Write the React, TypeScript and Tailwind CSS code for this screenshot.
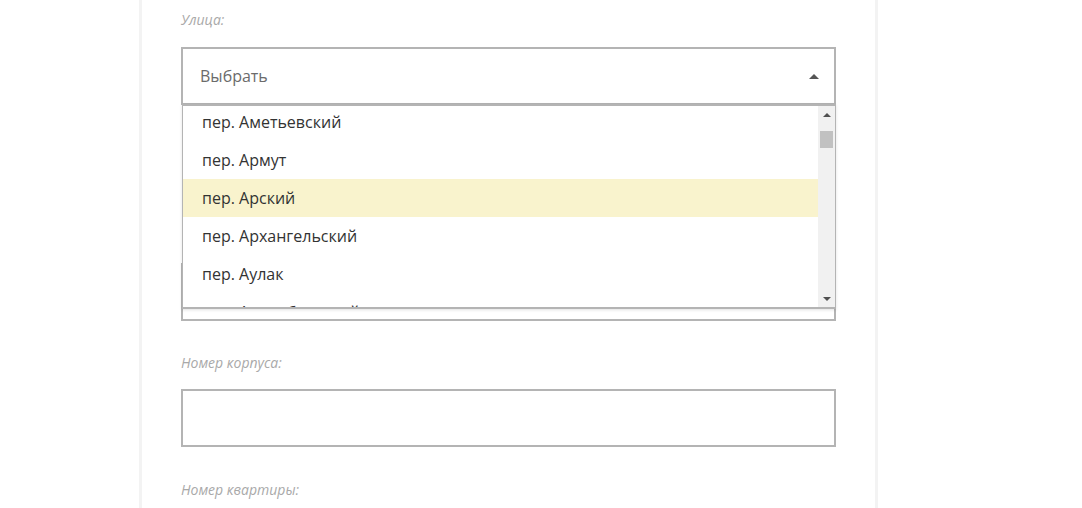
const streets = [
  'пер. Аметьевский',
  'пер. Армут',
  'пер. Арский',
  'пер. Архангельский',
  'пер. Аулак',
  'пер. Азинобаевский',
]

function Label({ children }: { children: string }) {
  return (
    <div className="text-[14px] leading-[18px] italic text-[#a9a9a9] font-['Open_Sans',sans-serif]">
      {children}
    </div>
  )
}

function StreetDropdown() {
  return (
    <div className="absolute z-10 left-[1px] right-0 top-[57px] h-[205px] flex bg-white border-x border-b-2 border-t-2 border-[#b4b4b4] shadow-[0_1px_3px_rgba(0,0,0,0.12)]">
      {/* options */}
      <div className="flex-1 overflow-hidden">
        <div className="-mt-[3px]">
          {streets.map((s, i) => (
            <div
              key={s}
              className={
                i === 2
                  ? 'h-[38px] flex items-center pl-[19px] text-[16px] text-[#333] bg-[#f9f3cd]'
                  : 'h-[38px] flex items-center pl-[19px] text-[16px] text-[#333]'
              }
            >
              {s}
            </div>
          ))}
        </div>
      </div>
      {/* scrollbar */}
      <div className="w-[17px] bg-[#f1f1f1] flex flex-col items-center">
        <div className="h-[17px] flex items-center justify-center">
          <div className="w-0 h-0 border-x-[4px] border-x-transparent border-b-[4px] border-b-[#505050]" />
        </div>
        <div className="mt-[8px] w-[13px] h-[17px] bg-[#c1c1c1]" />
        <div className="flex-1" />
        <div className="h-[17px] flex items-center justify-center">
          <div className="w-0 h-0 border-x-[4px] border-x-transparent border-t-[4px] border-t-[#505050]" />
        </div>
      </div>
    </div>
  )
}

export default function App() {
  return (
    <div className="h-screen overflow-hidden bg-white font-['Open_Sans',sans-serif]">
      <div className="ml-[139px] w-[739px] min-h-full bg-white border-x-[3px] border-[#f3f3f3] px-[39px] pt-[11px]">

        {/* Street */}
        <Label>Улица:</Label>
        <div className="relative mt-[18px]">
          <div className="h-[58px] border-2 border-[#b4b4b4] flex items-center justify-between pl-[17px] pr-[15px]">
            <span className="text-[16px] text-[#6b6b6b]">Выбрать</span>
            <div className="w-0 h-0 border-x-[5px] border-x-transparent border-b-[5px] border-b-[#555]" />
          </div>
          <StreetDropdown />
        </div>

        {/* House number field, its label is covered by the open dropdown */}
        <div className="mt-[158px] h-[58px] border-2 border-[#b4b4b4]" />

        {/* Building */}
        <div className="mt-[33px]">
          <Label>Номер корпуса:</Label>
          <div className="mt-[17px] h-[58px] border-2 border-[#b4b4b4]" />
        </div>

        {/* Apartment */}
        <div className="mt-[34px]">
          <Label>Номер квартиры:</Label>
          <div className="mt-[17px] h-[58px] border-2 border-[#b4b4b4]" />
        </div>

      </div>
    </div>
  )
}
